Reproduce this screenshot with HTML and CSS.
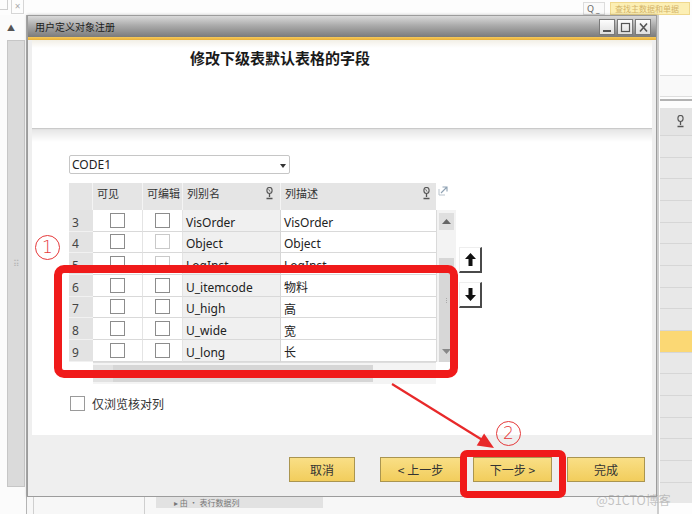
FILE: index.html
```html
<!DOCTYPE html>
<html lang="zh">
<head>
<meta charset="utf-8">
<title>用户定义对象注册</title>
<link rel="stylesheet" href="styles.css">
</head>
<body>
<div class="app">
  <div class="topbar">
    <div class="tb-left"><span class="mini-box"></span><span class="mini-x">×</span></div>
    <div class="tb-right">
      <span class="q-box">Q<span class="q-caret">_</span></span>
      <span class="search">查找主数据和单据</span>
    </div>
  </div>

  <aside class="leftpanel">
    <div class="lp-up">▲</div>
    <div class="lp-track"><span class="grip">⠿</span></div>
  </aside>

  <section class="dialog">
    <div class="titlebar">
      <span class="title">用户定义对象注册</span>
      <div class="winbtns">
        <span class="wb"><svg width="13" height="13" viewBox="0 0 13 13"><rect x="2" y="9" width="8" height="2" fill="#555"/></svg></span>
        <span class="wb"><svg width="13" height="13" viewBox="0 0 13 13"><rect x="2.5" y="2.5" width="8" height="8" fill="none" stroke="#555" stroke-width="1.2"/></svg></span>
        <span class="wb"><svg width="13" height="13" viewBox="0 0 13 13"><path d="M3 2.5 L10 10.5 M10 2.5 L3 10.5" stroke="#555" stroke-width="1.6"/></svg></span>
      </div>
    </div>
    <div class="accent"></div>
    <div class="content">
      <div class="head"><h1 class="heading">修改下级表默认表格的字段</h1></div>
      <div class="sep"></div>
      <div class="body">
        <div class="select">CODE1<span class="caret"></span></div>
        <div class="gridrow">
          <div class="grid">
            <div class="h"></div>
            <div class="h">可见</div>
            <div class="h">可编辑</div>
            <div class="h h-icon">列别名<svg class="lens" width="9" height="13" viewBox="0 0 9 13"><ellipse cx="4.5" cy="3.5" rx="2.6" ry="3" fill="none" stroke="#555" stroke-width="1.1"/><path d="M4.5 6.5 V10 M1.5 11.5 H7.5" stroke="#555" stroke-width="1.3"/><path d="M3.6 2.2 L5 4.6" stroke="#555" stroke-width="0.8"/></svg></div>
            <div class="h h-icon h-last">列描述<svg class="lens" width="9" height="13" viewBox="0 0 9 13"><ellipse cx="4.5" cy="3.5" rx="2.6" ry="3" fill="none" stroke="#555" stroke-width="1.1"/><path d="M4.5 6.5 V10 M1.5 11.5 H7.5" stroke="#555" stroke-width="1.3"/><path d="M3.6 2.2 L5 4.6" stroke="#555" stroke-width="0.8"/></svg></div>
            <div class="h-corner"><svg width="10" height="10" viewBox="0 0 10 10"><path d="M1 3 V9 H7" fill="none" stroke="#b9c3cc" stroke-width="1"/><path d="M3 7 L9 1 M4.5 1 H9 V5.5" fill="none" stroke="#8fa2b3" stroke-width="1.1"/></svg></div>

            <div class="n">3</div><div class="c"><span class="cb"></span></div><div class="c"><span class="cb"></span></div><div class="a">VisOrder</div><div class="d">VisOrder</div>
            <div class="vscroll">
              <div class="vs-btn"><svg width="9" height="5" viewBox="0 0 9 5"><path d="M0 5 L4.5 0 L9 5Z" fill="#666"/></svg></div>
              <div class="vs-track"></div>
              <div class="vs-thumb"><span class="vs-grip"></span><svg width="9" height="5" viewBox="0 0 9 5"><path d="M0 0 L4.5 5 L9 0Z" fill="#888"/></svg></div>
            </div>
            <div class="n">4</div><div class="c"><span class="cb"></span></div><div class="c"><span class="cb off"></span></div><div class="a">Object</div><div class="d">Object</div>
            <div class="n">5</div><div class="c"><span class="cb"></span></div><div class="c"><span class="cb off"></span></div><div class="a">LogInst</div><div class="d">LogInst</div>
            <div class="n">6</div><div class="c"><span class="cb"></span></div><div class="c"><span class="cb"></span></div><div class="a">U_itemcode</div><div class="d">物料</div>
            <div class="n">7</div><div class="c"><span class="cb"></span></div><div class="c"><span class="cb"></span></div><div class="a">U_high</div><div class="d">高</div>
            <div class="n">8</div><div class="c"><span class="cb"></span></div><div class="c"><span class="cb"></span></div><div class="a">U_wide</div><div class="d">宽</div>
            <div class="n">9</div><div class="c"><span class="cb"></span></div><div class="c"><span class="cb"></span></div><div class="a">U_long</div><div class="d">长</div>

            <div class="hs-empty"></div>
            <div class="hscroll">
              <div class="hs-btn">‹</div>
              <div class="hs-thumb"></div>
              <div class="hs-rest">›</div>
            </div>
          </div>
          <div class="movers">
            <span class="mv mv-up"><svg width="11" height="13" viewBox="0 0 11 13"><path d="M5.5 0 L11 6 H7.5 V13 H3.5 V6 H0Z" fill="#111"/></svg></span>
            <span class="mv mv-down"><svg width="11" height="13" viewBox="0 0 11 13"><path d="M5.5 13 L11 7 H7.5 V0 H3.5 V7 H0Z" fill="#111"/></svg></span>
          </div>
        </div>
        <div class="browse"><span class="cb cb-lg"></span><span>仅浏览核对列</span></div>
      </div>
      <div class="footer">
        <span class="btn btn-cancel">取消</span>
        <span class="btn btn-prev">&lt; 上一步</span>
        <span class="btn btn-next">下一步 &gt;</span>
        <span class="btn btn-done">完成</span>
      </div>
    </div>
  </section>

  <div class="under">
    <span class="u-line u-line1"></span>
    <span class="u-line u-line2"></span>
    <span class="u-panel">▸ 由 · 表行数据列</span>
  </div>

  <aside class="rightpanel">
    <div class="rp-box"></div>
    <div class="rp-line"></div>
    <div class="rp-head"><svg width="9" height="13" viewBox="0 0 9 13"><ellipse cx="4.5" cy="3.5" rx="2.6" ry="3" fill="none" stroke="#555" stroke-width="1.1"/><path d="M4.5 6.5 V10 M1.5 11.5 H7.5" stroke="#555" stroke-width="1.3"/></svg></div>
    <div class="rp-cell"></div><div class="rp-cell"></div><div class="rp-cell"></div>
    <div class="rp-cell"></div><div class="rp-cell"></div><div class="rp-cell"></div>
    <div class="rp-cell"></div><div class="rp-cell"></div><div class="rp-cell"></div>
    <div class="rp-cell rp-yellow"></div>
    <div class="rp-cell"></div><div class="rp-cell"></div><div class="rp-cell"></div>
    <div class="rp-cell"></div><div class="rp-cell"></div><div class="rp-cell"></div>
    <div class="rp-cell"></div>
  </aside>
</div>

<div class="anno">
  <div class="redbox redbox1"></div>
  <div class="redbox redbox2"></div>
  <div class="num num1">1</div>
  <div class="num num2">2</div>
  <svg class="arrow" width="692" height="514" viewBox="0 0 692 514">
    <path d="M392 384 L484 441" stroke="#e8292a" stroke-width="2.2" fill="none"/>
    <polygon points="494,448 476.7,445.4 484.1,433.6" fill="#e8292a"/>
  </svg>
  <div class="watermark">@51CTO博客</div>
</div>
</body>
</html>
```

FILE: styles.css
```css
* { box-sizing: border-box; }
html, body { margin: 0; padding: 0; }
body {
  width: 692px;
  height: 514px;
  overflow: hidden;
  position: relative;
  background: #f4f4f4;
  font-family: "Noto Sans", "Noto Sans CJK SC", sans-serif;
  color: #222;
}

.app {
  display: grid;
  grid-template-columns: 27px 630px 35px;
  grid-template-rows: 15px 482px 17px;
  width: 692px;
  height: 514px;
}

/* top strip */
.topbar {
  grid-column: 1 / 4;
  grid-row: 1;
  background: #fdfdfd;
  display: flex;
  justify-content: space-between;
  align-items: flex-start;
}
.tb-left { display: flex; gap: 3px; }
.mini-box { width: 8px; height: 10px; border: 1px solid #cfcfcf; border-top: none; border-left: none; }
.mini-x {
  width: 13px; height: 14px; border: 1px solid #d6d6d6; border-top: none;
  font-size: 10px; line-height: 12px; color: #aaa; text-align: center;
}
.tb-right { display: flex; gap: 5px; padding-top: 2px; padding-right: 2px; }
.q-box {
  width: 22px; height: 13px; border: 1px solid #dcdcdc; background: #fafafa;
  font-size: 9px; line-height: 11px; color: #666; padding-left: 3px;
}
.q-caret { font-size: 8px; margin-left: 2px; }
.search {
  width: 80px; height: 13px; background: #fcefb4; border: 1px solid #efd88e;
  font-size: 8px; line-height: 11px; color: #d3b46a; padding-left: 4px;
  font-family: "Noto Sans CJK SC", sans-serif; white-space: nowrap; overflow: hidden;
}

/* left panel */
.leftpanel {
  grid-column: 1;
  grid-row: 2 / 4;
  background: #fbfbfb;
  border-right: 1px solid #b4b4b4;
  display: flex;
  flex-direction: column;
}
.lp-up { height: 25px; font-size: 8px; color: #555; padding-left: 7px; padding-top: 7px; }
.lp-track {
  margin-left: 7px;
  width: 18px;
  height: 447px;
  background: #dadada;
  border: 1px solid #c6c6c6;
  display: flex;
  align-items: center;
  justify-content: center;
}
.grip { font-size: 9px; color: #b5b5b5; }

/* dialog */
.dialog {
  grid-column: 2;
  grid-row: 2;
  background: #efefef;
  border: 1px solid #9c9c9c;
  box-shadow: 0 0 3px rgba(0,0,0,0.25);
  display: flex;
  flex-direction: column;
}
.titlebar {
  height: 21px;
  background: linear-gradient(#dadada, #ababab 45%, #7b7b7b);
  display: flex;
  align-items: center;
  justify-content: space-between;
  padding: 0 5px 0 7px;
}
.title { font-size: 10px; color: #1c1c1c; font-family: "Noto Sans CJK SC", sans-serif; }
.winbtns { display: flex; gap: 2px; padding-top: 1px; }
.wb {
  width: 16px; height: 16px;
  border: 1px solid #7a7a7a;
  background: linear-gradient(#fdfdfd, #dedede);
  display: flex; align-items: center; justify-content: center;
}
.accent { height: 3px; background: linear-gradient(#f6c95a, #e9b038); }
.content {
  flex: 1;
  margin: 0 4px 1px 4px;
  display: flex;
  flex-direction: column;
}
.head {
  height: 88px;
  background: linear-gradient(#f2efe6, #ffffff 8px);
  padding: 9px 0 0 158px;
}
.heading {
  margin: 0;
  font-size: 15px;
  line-height: 18px;
  font-weight: bold;
  color: #1a1a1a;
  font-family: "Noto Sans CJK SC", sans-serif;
}
.sep { height: 2px; border-top: 1px solid #cacaca; background: #e2e2e2; }
.body {
  height: 305px;
  background: linear-gradient(#e7e7e7, #ffffff 12px);
  padding: 25px 0 0 37px;
  display: flex;
  flex-direction: column;
}
.select {
  width: 221px;
  height: 19px;
  border: 1px solid #c6c6c6;
  border-radius: 2px;
  background: #fff;
  font-size: 12px;
  line-height: 18px;
  padding-left: 2px;
  color: #222;
  position: relative;
}
.caret {
  position: absolute;
  right: 3px; top: 8px;
  border-left: 3px solid transparent;
  border-right: 3px solid transparent;
  border-top: 4px solid #333;
}
.gridrow { display: flex; margin-top: 9px; gap: 3px; }
.grid {
  display: grid;
  grid-template-columns: 24px 50px 40px 98px 155px 20px;
  grid-template-rows: 27px repeat(7, 21.67px) 22px;
  font-size: 12px;
}
.h {
  background: #e5e5e5;
  border-right: 1px solid #f4f4f4;
  font-size: 11px;
  line-height: 14px;
  color: #333;
  padding: 3px 0 0 4px;
  font-family: "Noto Sans CJK SC", sans-serif;
}
.h-icon { position: relative; }
.lens { position: absolute; right: 6px; top: 4px; }
.h-last .lens { right: 5px; }
.h-last { border-right: none; }
.h-corner { padding: 0 0 0 2px; }
.n, .c, .a, .d {
  border-bottom: 1px solid #d9d9d9;
  display: flex;
  align-items: center;
}
.n, .a, .d { padding-top: 4px; }
.n { background: #e3e3e3; padding-left: 3px; color: #444; border-bottom-color: #f1f1f1; }
.c { background: #fff; justify-content: center; border-right: 1px solid #e4e4e4; }
.a { background: #f0f0f0; padding-left: 3px; border-right: 1px solid #d6d6d6; }
.d { background: #fff; padding-left: 3px; }
.a, .d { color: #222; font-family: "Noto Sans", "Noto Sans CJK SC", sans-serif; }
.cb {
  width: 15px; height: 15px;
  border: 1px solid #8c8c8c;
  background: #fff;
  display: inline-block;
}
.cb.off { border-color: #c9c9c9; }
.vscroll {
  grid-column: 6;
  grid-row: 2 / 9;
  background: #f3f3f3;
  border-left: 1px solid #dadada;
  display: flex;
  flex-direction: column;
  padding: 3px 2px 0 2px;
}
.vs-btn { height: 17px; background: #dfdfdf; display: flex; align-items: center; justify-content: center; }
.vs-track { height: 28px; }
.vs-thumb {
  flex: 1;
  background: #d7d7d7;
  display: flex;
  flex-direction: column;
  align-items: center;
  justify-content: space-between;
  padding: 40px 0 8px;
}
.vs-grip { width: 2px; height: 5px; border-left: 1px dotted #aaa; }
.hs-empty { grid-column: 1; grid-row: 9; }
.hscroll {
  grid-column: 2 / 6;
  grid-row: 9;
  background: #f4f4f4;
  border-top: 1px solid #dedede;
  display: flex;
  padding: 2px 0;
}
.hs-btn { width: 20px; background: #e2e2e2; font-size: 10px; color: #999; text-align: center; line-height: 16px; }
.hs-thumb { width: 260px; background: #d6d6d6; }
.hs-rest { flex: 1; text-align: right; padding-right: 8px; font-size: 11px; color: #aaa; line-height: 16px; }
.movers { display: flex; flex-direction: column; padding-top: 64px; gap: 9px; }
.mv {
  width: 23px; height: 26px;
  background: #fff;
  border-right: 2px solid #4a4a4a;
  border-bottom: 2px solid #4a4a4a;
  border-top: 1px solid #eeeeee;
  border-left: 1px solid #eeeeee;
  display: flex; align-items: center; justify-content: center;
}
.browse {
  margin-top: 11px;
  margin-left: 1px;
  display: flex;
  align-items: center;
  gap: 7px;
  font-size: 12px;
  color: #333;
  font-family: "Noto Sans CJK SC", sans-serif;
}
.cb-lg { width: 15px; height: 15px; border-color: #9a9a9a; }
.footer {
  flex: 1;
  background: #efefef;
  display: flex;
  align-items: flex-start;
  justify-content: flex-end;
  padding: 22px 7px 0 0;
}
.btn {
  height: 25px;
  border: 1px solid #aa9550;
  background: linear-gradient(#f9df86, #f2cd5c);
  font-size: 12px;
  line-height: 23px;
  color: #333;
  text-align: center;
  font-family: "Noto Sans CJK SC", sans-serif;
}
.btn-cancel { width: 66px; margin-right: 25px; }
.btn-prev { width: 81px; margin-right: 12px; }
.btn-next { width: 79px; margin-right: 15px; }
.btn-done { width: 78px; }

/* below dialog */
.under {
  grid-column: 2;
  grid-row: 3;
  background: #f7f7f7;
  display: flex;
  align-items: flex-start;
}
.u-line { width: 1px; align-self: stretch; background: #cfcfcf; }
.u-line1 { margin-left: 6px; }
.u-line2 { margin-left: 110px; }
.u-panel {
  margin-left: 11px;
  width: 167px;
  height: 11px;
  background: #e2e2e2;
  font-size: 8px;
  line-height: 11px;
  padding-left: 18px;
  color: #777;
  white-space: nowrap;
  font-family: "Noto Sans CJK SC", sans-serif;
}

/* right panel */
.rightpanel {
  grid-column: 3;
  grid-row: 2 / 4;
  background: #fdfdfd;
  border-left: 2px solid #cdcdcd;
  display: flex;
  flex-direction: column;
  padding-left: 1px;
  overflow: hidden;
}
.rp-box { margin-top: 60px; height: 22px; flex-shrink: 0; border-top: 1px solid #dedede; border-bottom: 1px solid #dedede; background: #f9f9f9; }
.rp-line { margin-top: 2px; height: 2px; flex-shrink: 0; background: #b3b3b3; }
.rp-head {
  margin-top: 7px;
  height: 27px;
  flex-shrink: 0;
  background: #e4e4e4;
  display: flex;
  justify-content: flex-end;
  align-items: center;
  padding-right: 7px;
}
.rp-cell { height: 21.67px; flex-shrink: 0; background: #e8e8e8; border-top: 1px solid #d6d6d6; }
.rp-yellow { background: #fbd874; }

/* annotations overlay */
.anno { position: absolute; left: 0; top: 0; width: 692px; height: 514px; pointer-events: none; }
.redbox { position: absolute; border: 8px solid #f01a1a; border-radius: 10px; }
.redbox1 { left: 54px; top: 265px; width: 404px; height: 113px; }
.redbox2 { left: 460px; top: 450px; width: 106px; height: 48px; border-width: 7px; border-radius: 7px; }
.num {
  position: absolute;
  width: 25px; height: 25px;
  border: 1.3px solid #e5393a;
  border-radius: 50%;
  color: #e5393a;
  font-size: 17px;
  line-height: 22px;
  text-align: center;
  font-family: "DejaVu Sans", sans-serif;
  font-weight: 300;
}
.num1 { left: 35px; top: 235px; }
.num2 { left: 496px; top: 421px; }
.arrow { position: absolute; left: 0; top: 0; }
.watermark {
  position: absolute;
  left: 596px; top: 490px;
  font-size: 12.5px;
  color: rgba(150,150,150,0.55);
  font-family: "Noto Sans CJK SC", sans-serif;
}
```
